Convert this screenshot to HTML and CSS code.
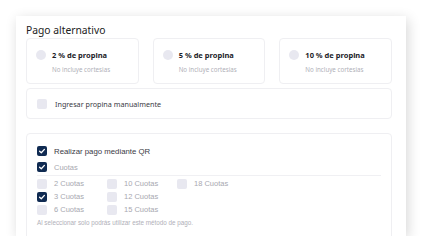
FILE: index.html
```html
<!DOCTYPE html>
<html lang="es">
<head>
    <meta charset="UTF-8">
    <meta name="viewport" content="width=device-width, initial-scale=1.0">
    <title>Pago alternativo</title>
    <link rel="stylesheet" href="styles.css">
</head>
<body>
    <div class="card">
        <h2 class="title">Pago alternativo</h2>

        <!-- Propinas fijas -->
        <div class="tips">
            <div class="tip">
                <div class="tip-head"><span class="radio"></span>2 % de propina</div>
                <div class="tip-sub">No incluye cortesias</div>
            </div>
            <div class="tip">
                <div class="tip-head"><span class="radio"></span>5 % de propina</div>
                <div class="tip-sub">No incluye cortesias</div>
            </div>
            <div class="tip">
                <div class="tip-head"><span class="radio"></span>10 % de propina</div>
                <div class="tip-sub">No incluye cortesias</div>
            </div>
        </div>

        <div class="manual">
            <span class="check"></span>
            <span class="manual-label">Ingresar propina manualmente</span>
        </div>

        <!-- Pago QR -->
        <div class="qr-box">
            <div class="row row-main">
                <span class="check checked"><svg viewBox="0 0 10 10"><polyline points="2.6,5.2 4.3,6.8 7.4,3.4"/></svg></span>
                Realizar pago mediante QR
            </div>
            <div class="row row-cuotas">
                <span class="check checked"><svg viewBox="0 0 10 10"><polyline points="2.6,5.2 4.3,6.8 7.4,3.4"/></svg></span>
                Cuotas
            </div>
            <div class="cuotas">
                <div class="cuota"><span class="check"></span>2 Cuotas</div>
                <div class="cuota"><span class="check checked"><svg viewBox="0 0 10 10"><polyline points="2.6,5.2 4.3,6.8 7.4,3.4"/></svg></span>3 Cuotas</div>
                <div class="cuota"><span class="check"></span>6 Cuotas</div>
                <div class="cuota"><span class="check"></span>10 Cuotas</div>
                <div class="cuota"><span class="check"></span>12 Cuotas</div>
                <div class="cuota"><span class="check"></span>15 Cuotas</div>
                <div class="cuota"><span class="check"></span>18 Cuotas</div>
            </div>
            <p class="note">Al seleccionar solo podrás utilizar este método de pago.</p>
        </div>
    </div>
</body>
</html>
```

FILE: styles.css
```css
body {
    margin: 0;
    background-color: #ffffff;
    font-family: "Noto Sans", sans-serif;
}

.card {
    margin: 16px 0 0 16px;
    width: 390px;
    height: 220px;
    box-sizing: border-box;
    padding: 6px 14px 0 10px;
    background-color: #fff;
    box-shadow: 2px 3px 12px rgba(0, 0, 0, 0.16);
    overflow: hidden;
}

.title {
    margin: 0;
    font-size: 10.3px;
    line-height: 16px;
    font-weight: 400;
    color: #222;
}

.tips {
    display: flex;
    gap: 14px;
}

.tip {
    flex: 1;
    height: 46px;
    box-sizing: border-box;
    padding: 10px 9px 0;
    border: 1px solid #efeff2;
    border-radius: 4px;
}

.tip-head {
    display: flex;
    align-items: center;
    gap: 6px;
    height: 12px;
    font-size: 7.5px;
    font-weight: 700;
    color: #1c1c28;
}

.radio {
    width: 10px;
    height: 10px;
    border-radius: 50%;
    background-color: #e8e8f0;
    flex-shrink: 0;
}

.tip-sub {
    margin: 3px 0 0 16px;
    font-size: 6.2px;
    line-height: 12px;
    color: #b0b0b8;
}

.manual {
    display: flex;
    align-items: center;
    gap: 8px;
    height: 31px;
    box-sizing: border-box;
    margin-top: 4px;
    padding-left: 10px;
    border: 1px solid #efeff2;
    border-radius: 4px;
}

.manual-label {
    font-size: 7.2px;
    color: #3a3a44;
}

.check {
    display: flex;
    align-items: center;
    justify-content: center;
    width: 10px;
    height: 10px;
    border-radius: 2px;
    background-color: #e8e8f0;
    flex-shrink: 0;
}

.check.checked {
    background-color: #102b52;
}

.check svg {
    width: 10px;
    height: 10px;
    fill: none;
    stroke: #fff;
    stroke-width: 1.3;
    stroke-linecap: round;
    stroke-linejoin: round;
}

.qr-box {
    margin-top: 14px;
    height: 120px;
    box-sizing: border-box;
    padding: 10px 10px 0;
    border: 1px solid #efeff2;
    border-radius: 4px;
    font-family: "Liberation Sans", Arial, sans-serif;
}

.row {
    display: flex;
    align-items: center;
    gap: 7px;
    height: 14px;
}

.row-main {
    font-size: 7.8px;
    color: #3a3a44;
}

.row-cuotas {
    margin-top: 2px;
    padding-bottom: 1px;
    border-bottom: 1px solid #f0f0f3;
    font-size: 7.5px;
    color: #a8a8b0;
}

.cuotas {
    display: grid;
    grid-auto-flow: column;
    grid-template-rows: repeat(3, 13px);
    grid-template-columns: repeat(3, 70px);
    padding-top: 1px;
}

.cuota {
    display: flex;
    align-items: center;
    gap: 7px;
    font-size: 7.5px;
    color: #a8a8b0;
}

.note {
    margin: 1px 0 0;
    font-size: 6.3px;
    line-height: 12px;
    color: #b0b0b8;
}
```
